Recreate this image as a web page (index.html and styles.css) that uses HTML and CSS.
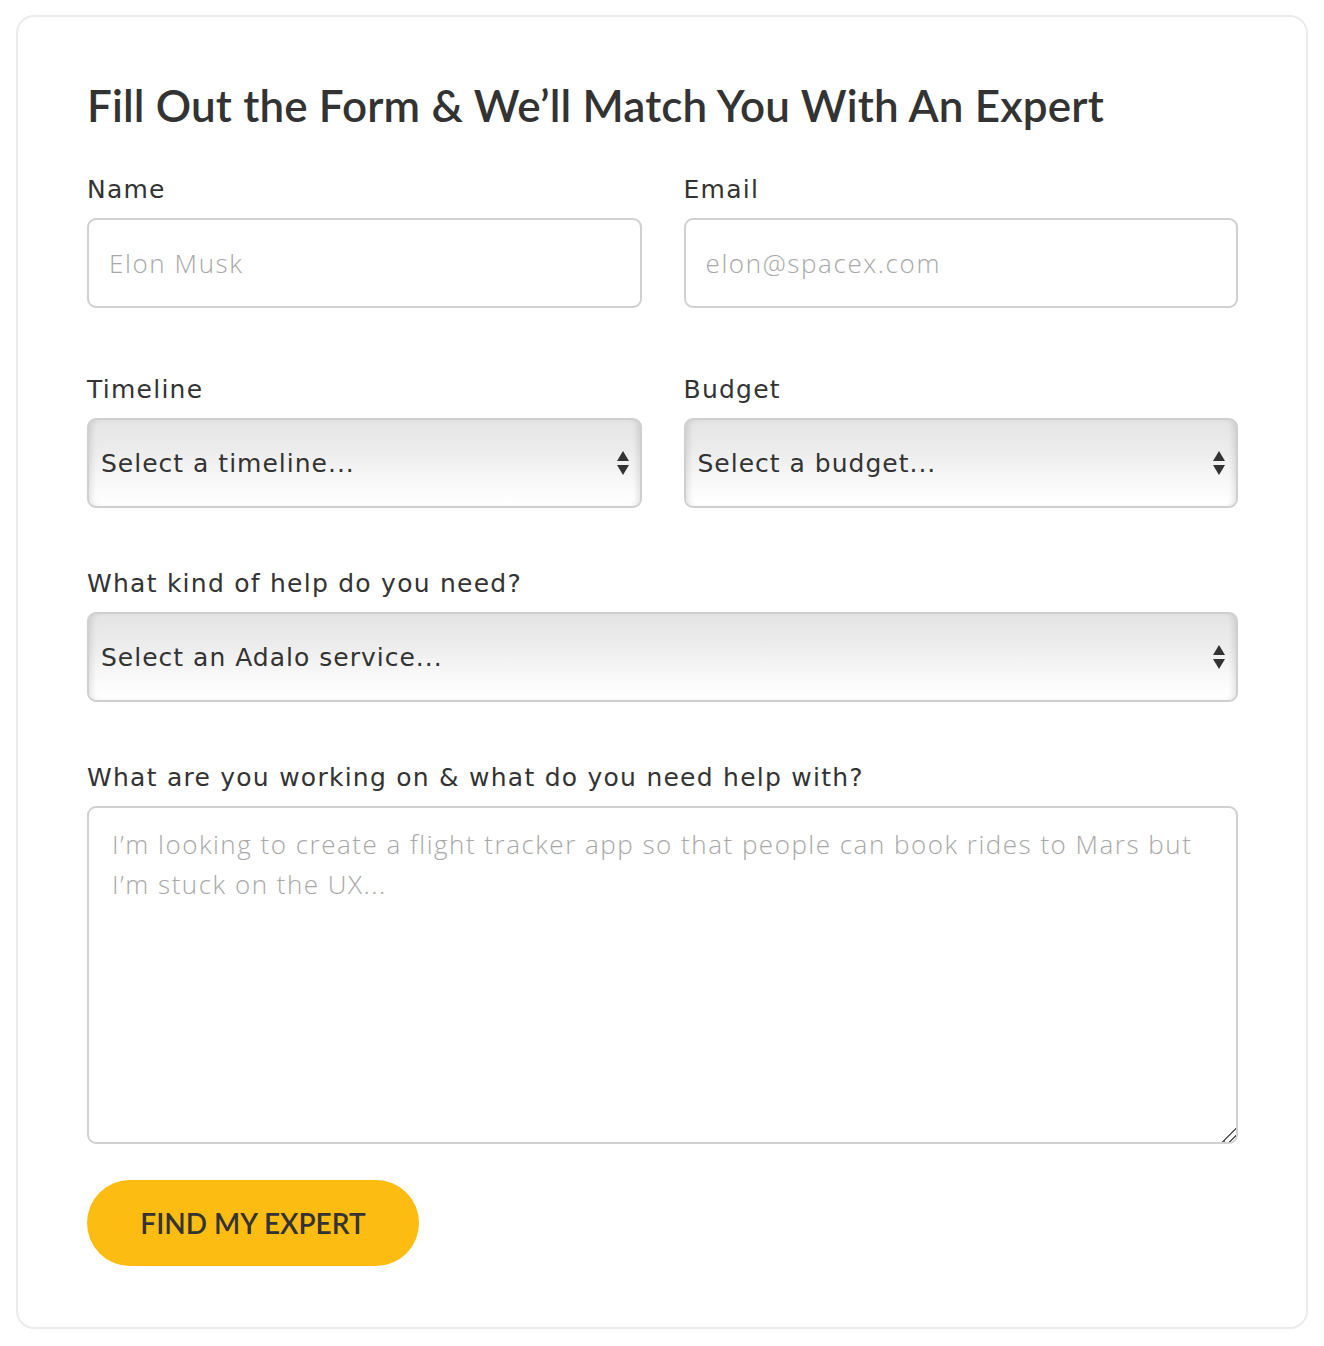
FILE: index.html
```html
<!DOCTYPE html>
<html lang="en">
<head>
<meta charset="utf-8">
<title>Find an Expert</title>
<link rel="stylesheet" href="styles.css">
</head>
<body>
<div class="card">
  <h1 class="title">Fill Out the Form &amp; We’ll Match You With An Expert</h1>
  <form class="form">
    <div class="row row-inputs">
      <div class="field">
        <label class="label" for="name">Name</label>
        <input class="input" id="name" type="text" placeholder="Elon Musk">
      </div>
      <div class="field">
        <label class="label" for="email">Email</label>
        <input class="input" id="email" type="email" placeholder="elon@spacex.com">
      </div>
    </div>
    <div class="row row-selects">
      <div class="field">
        <label class="label">Timeline</label>
        <div class="select">
          <span class="select-text">Select a timeline...</span>
          <svg class="arrows" width="14" height="26" viewBox="0 0 14 26"><path d="M7 1 L13 11 L1 11 Z" fill="#333"/><path d="M1 15 L13 15 L7 25 Z" fill="#333"/></svg>
        </div>
      </div>
      <div class="field">
        <label class="label">Budget</label>
        <div class="select">
          <span class="select-text">Select a budget...</span>
          <svg class="arrows" width="14" height="26" viewBox="0 0 14 26"><path d="M7 1 L13 11 L1 11 Z" fill="#333"/><path d="M1 15 L13 15 L7 25 Z" fill="#333"/></svg>
        </div>
      </div>
    </div>
    <div class="field field-help">
      <label class="label">What kind of help do you need?</label>
      <div class="select">
        <span class="select-text">Select an Adalo service...</span>
        <svg class="arrows" width="14" height="26" viewBox="0 0 14 26"><path d="M7 1 L13 11 L1 11 Z" fill="#333"/><path d="M1 15 L13 15 L7 25 Z" fill="#333"/></svg>
      </div>
    </div>
    <div class="field field-text">
      <label class="label" for="msg">What are you working on &amp; what do you need help with?</label>
      <textarea class="textarea" id="msg" placeholder="I’m looking to create a flight tracker app so that people can book rides to Mars but I’m stuck on the UX..."></textarea>
    </div>
    <button class="button" type="button">FIND MY EXPERT</button>
  </form>
</div>
</body>
</html>
```
FILE: styles.css
```css
* { box-sizing: border-box; }
html, body { margin: 0; padding: 0; background: #fff; }
body { font-family: "DejaVu Sans", sans-serif; color: #333; }

.card {
  margin: 15px 16px 0 16px;
  width: 1292px;
  height: 1314px;
  border: 2px solid #ebebeb;
  border-radius: 18px;
  padding: 62px 68px 0 69px;
}

.title {
  margin: 0;
  font-family: "Lato", sans-serif;
  font-weight: 600;
  font-size: 44px;
  line-height: 52px;
  letter-spacing: 0.15px;
  color: #333;
}

.form { margin-top: 45px; }

.row {
  display: grid;
  grid-template-columns: 1fr 1fr;
  column-gap: 42px;
}
.row-inputs { margin-bottom: 68px; }
.row-selects { margin-bottom: 62px; }
.field-help { margin-bottom: 62px; }
.field-text { margin-bottom: 36px; }

.field { display: flex; flex-direction: column; }

.label {
  font-family: "DejaVu Sans", sans-serif;
  font-size: 25px;
  line-height: 28px;
  margin-bottom: 14px;
  color: #333;
  letter-spacing: 1.25px;
}

.input {
  height: 90px;
  width: 100%;
  border: 2px solid #d0d0d0;
  border-radius: 9px;
  padding: 0 20px;
  font-family: "Open Sans", sans-serif;
  font-size: 26px;
  letter-spacing: 1.6px;
  color: #333;
  background: #fff;
  outline: none;
}
.input::placeholder { color: #a8a8a8; font-weight: 300; }

.select {
  height: 90px;
  border: 2px solid #cfcfcf;
  border-radius: 9px;
  background: linear-gradient(#e4e4e4 0%, #ececec 35%, #fbfbfb 80%, #ffffff 100%);
  box-shadow: inset 6px 0 6px -4px rgba(0,0,0,0.12), inset -6px 0 6px -4px rgba(0,0,0,0.12);
  display: flex;
  align-items: center;
  justify-content: space-between;
  padding: 0 10px 0 12px;
}
.select-text {
  font-family: "DejaVu Sans", sans-serif;
  font-size: 25px;
  color: #333;
  letter-spacing: 1px;
}
.arrows { display: block; }

.textarea {
  width: 100%;
  height: 338px;
  border: 2px solid #d0d0d0;
  border-radius: 9px;
  padding: 16px 23px;
  font-family: "Open Sans", sans-serif;
  font-size: 26px;
  line-height: 40px;
  letter-spacing: 1.5px;
  color: #333;
  resize: vertical;
  outline: none;
}
.textarea::placeholder { color: #a8a8a8; font-weight: 300; }
.textarea::-webkit-resizer {
  background: linear-gradient(135deg, transparent 0 52%, #5a5a5a 52% 60%, transparent 60% 74%, #5a5a5a 74% 82%, transparent 82%);
}

.button {
  width: 332px;
  height: 86px;
  border: none;
  border-radius: 43px;
  background: #fdbc11;
  font-family: "Lato", sans-serif;
  font-weight: 600;
  font-size: 28px;
  color: #333;
  cursor: pointer;
  padding: 0;
}
```
